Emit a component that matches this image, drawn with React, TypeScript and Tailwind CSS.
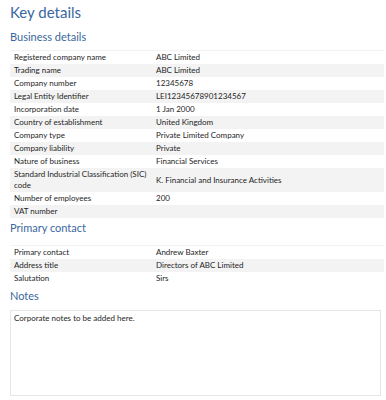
import React from "react";

type Row = [string, string];

const business: Row[] = [
  ["Registered company name", "ABC Limited"],
  ["Trading name", "ABC Limited"],
  ["Company number", "12345678"],
  ["Legal Entity Identifier", "LEI12345678901234567"],
  ["Incorporation date", "1 Jan 2000"],
  ["Country of establishment", "United Kingdom"],
  ["Company type", "Private Limited Company"],
  ["Company liability", "Private"],
  ["Nature of business", "Financial Services"],
  ["Standard Industrial Classification (SIC) code", "K. Financial and Insurance Activities"],
  ["Number of employees", "200"],
  ["VAT number", ""],
];

const contact: Row[] = [
  ["Primary contact", "Andrew Baxter"],
  ["Address title", "Directors of ABC Limited"],
  ["Salutation", "Sirs"],
];

function Table({ rows }: { rows: Row[] }) {
  return (
    <div className="ml-[10px] mr-[2px] border-t border-[#f3f3f3]">
      {rows.map(([k, v], i) => (
        <div key={k} className={`flex items-center text-[8px] leading-[11px] text-[#1e1e1e] ${i % 2 ? "bg-[#f3f3f3]" : "bg-white"}`}>
          <div className="w-[142px] pl-[4px] py-[1px]">{k}</div>
          <div className="flex-1 pl-[4px] py-[1px]">{v}</div>
        </div>
      ))}
    </div>
  );
}

export default function App() {
  return (
    <div className="w-[386px] h-[400px] overflow-hidden bg-white font-['Lato',sans-serif]">
      <h1 className="pl-[10px] pt-[1px] text-[15px] leading-[22px] text-[#3a67a0]">Key details</h1>
      <h2 className="pl-[10px] mt-[5px] mb-[5px] text-[11px] leading-[17px] text-[#3a67a0]">Business details</h2>
      <Table rows={business} />
      <h2 className="pl-[10px] mt-[1px] mb-[9px] text-[11px] leading-[17px] text-[#3a67a0]">Primary contact</h2>
      <Table rows={contact} />
      <h2 className="pl-[10px] mt-[2px] mb-[6px] text-[11px] leading-[17px] text-[#3a67a0]">Notes</h2>
      <div className="ml-[10px] mr-[5px] h-[86px] border border-[#e6e6e6] px-[3px] py-[2px] text-[8px] leading-[11px] text-[#1e1e1e]">
        Corporate notes to be added here.
      </div>
    </div>
  );
}
